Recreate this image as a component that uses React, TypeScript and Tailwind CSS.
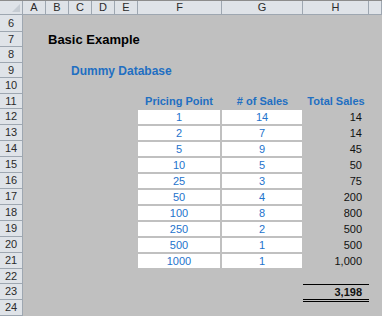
import React from "react";

const colW = [23, 23, 23, 23, 23, 23, 84, 81, 66, 13];
const colLetters = ["", "A", "B", "C", "D", "E", "F", "G", "H", ""];
const rowHeights: Record<number, string> = {
  6: "h-[17px]",
  7: "h-[15px]",
  8: "h-[16px]",
  9: "h-[15px]",
  10: "h-[16px]",
  11: "h-[15px]",
  22: "h-[15px]",
};

const F = ["1", "2", "5", "10", "25", "50", "100", "250", "500", "1000"];
const G = ["14", "7", "9", "5", "3", "4", "8", "2", "1", "1"];
const H = ["14", "14", "45", "50", "75", "200", "800", "500", "500", "1,000"];

function RowHeader({ n }: { n: number }) {
  return (
    <div className="w-[23px] shrink-0 h-full bg-[#dfe3e8] border-r border-b border-[#9ea7b1] flex items-center justify-center text-[11px] text-[#2b2b2b]">
      {n}
    </div>
  );
}

function Spacer({ w }: { w: number }) {
  return <div className="shrink-0 h-full" style={{ width: w }} />;
}

export default function App() {
  const rows: number[] = [];
  for (let i = 6; i <= 24; i++) rows.push(i);

  return (
    <div className="w-[382px] h-[316px] overflow-hidden bg-[#c0c0c0] font-['Liberation_Sans',Arial,sans-serif] flex flex-col">
      {/* column header */}
      <div className="flex h-[15px] shrink-0 border-t border-[#8c8c8c]">
        {colW.map((w, i) => (
          <div
            key={i}
            className="relative shrink-0 h-full bg-[#dfe3e8] border-r border-b border-[#9ea7b1] flex items-center justify-center text-[11px] text-[#2b2b2b] leading-none"
            style={{ width: w }}
          >
            {i === 0 && (
              <svg className="absolute right-[2px] bottom-[2px]" width="8" height="8" viewBox="0 0 8 8">
                <polygon points="8,0 8,8 0,8" fill="#c6ccd3" />
              </svg>
            )}
            {colLetters[i]}
          </div>
        ))}
      </div>

      {rows.map((r) => {
        const h = rowHeights[r] ?? "h-[16px]";
        const di = r - 12;
        const isData = di >= 0 && di < 10;
        return (
          <div key={r} className={`flex shrink-0 ${h}`}>
            <RowHeader n={r} />
            {r === 7 && (
              <div className="flex-1 h-full flex items-center pl-[2px] text-[13px] font-bold text-black ml-[23px]">
                Basic Example
              </div>
            )}
            {r === 9 && (
              <div className="flex-1 h-full flex items-center pl-[2px] text-[12px] font-bold text-[#1f6fc2] ml-[46px]">
                Dummy Database
              </div>
            )}
            {r === 11 && (
              <>
                <Spacer w={115} />
                <div className="w-[84px] shrink-0 h-full flex items-center justify-center text-[11px] font-bold text-[#1f6fc2] pr-[2px]">
                  Pricing Point
                </div>
                <div className="w-[81px] shrink-0 h-full flex items-center justify-center text-[11px] font-bold text-[#1f6fc2]">
                  # of Sales
                </div>
                <div className="w-[66px] shrink-0 h-full flex items-center justify-center text-[11px] font-bold text-[#1f6fc2]">
                  Total Sales
                </div>
              </>
            )}
            {isData && (
              <>
                <Spacer w={115} />
                <div className="w-[84px] shrink-0 h-full flex items-center">
                  <div className="w-[82px] h-[14px] bg-white flex items-center justify-center text-[11px] text-[#2473cc]">
                    {F[di]}
                  </div>
                </div>
                <div className="w-[81px] shrink-0 h-full flex items-center">
                  <div className="w-[80px] h-[14px] bg-white flex items-center justify-center text-[11px] text-[#2473cc]">
                    {G[di]}
                  </div>
                </div>
                <div className="w-[66px] shrink-0 h-full flex items-center justify-end pr-[7px] text-[11px] text-[#111]">
                  {H[di]}
                </div>
              </>
            )}
            {r === 23 && (
              <>
                <Spacer w={280} />
                <div className="w-[66px] shrink-0 h-[18px] self-start border-t border-b-[3px] border-double border-black flex items-center justify-end pr-[7px] text-[11px] font-bold text-[#111]">
                  3,198
                </div>
              </>
            )}
          </div>
        );
      })}
    </div>
  );
}
